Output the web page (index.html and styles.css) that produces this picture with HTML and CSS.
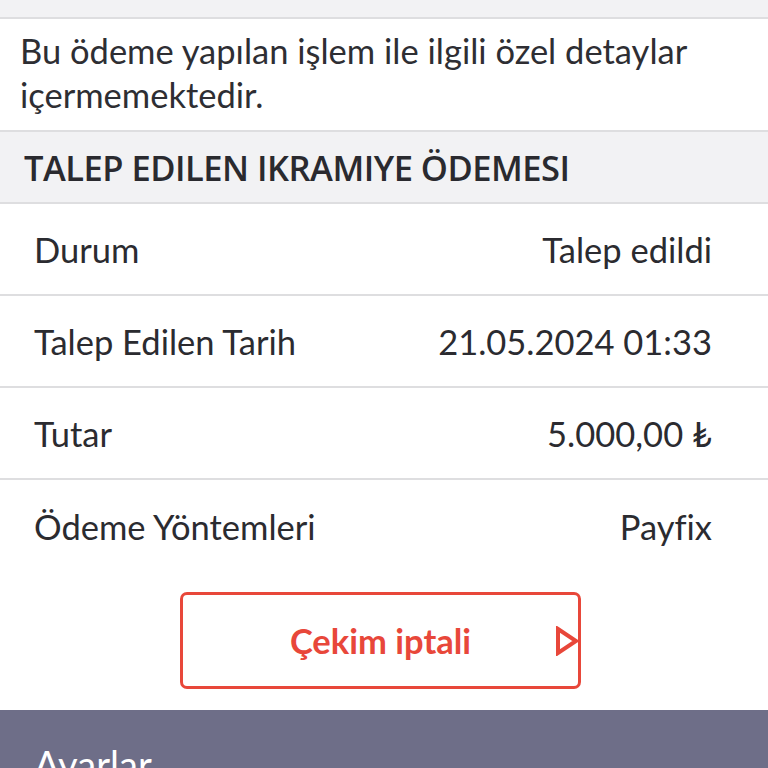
FILE: index.html
```html
<!DOCTYPE html>
<html lang="tr">
<head>
    <meta charset="UTF-8">
    <meta name="viewport" content="width=device-width, initial-scale=1.0">
    <title>Talep Edilen Ikramiye Ödemesi</title>
    <link rel="stylesheet" href="styles.css">
</head>
<body>

<div class="top-strip"></div>

<!-- Description -->
<div class="note">
    Bu ödeme yapılan işlem ile ilgili özel detaylar içermemektedir.
</div>

<!-- Section -->
<div class="section-title">TALEP EDILEN IKRAMIYE ÖDEMESI</div>

<div class="details">
    <div class="row">
        <span>Durum</span>
        <span>Talep edildi</span>
    </div>
    <div class="row">
        <span>Talep Edilen Tarih</span>
        <span>21.05.2024 01:33</span>
    </div>
    <div class="row">
        <span>Tutar</span>
        <span>5.000,00 ₺</span>
    </div>
    <div class="row last">
        <span>Ödeme Yöntemleri</span>
        <span>Payfix</span>
    </div>
</div>

<div class="actions">
    <button class="cancel-btn">
        Çekim iptali
        <svg class="arrow" width="26" height="30" viewBox="0 0 26 30">
            <path d="M4 3 L22 15 L4 27 Z" fill="none" stroke="#e8473a" stroke-width="4"/>
        </svg>
    </button>
</div>

<!-- Bottom bar -->
<div class="bottom-bar">
    <span>Ayarlar</span>
</div>

</body>
</html>
```

FILE: styles.css
```css
/* Base Styles */
* {
    margin: 0;
    padding: 0;
    box-sizing: border-box;
}

body {
    font-family: Lato, "Open Sans", sans-serif;
    background-color: #ffffff;
    color: #2b2b30;
    width: 768px;
    height: 768px;
    overflow: hidden;
}

.top-strip {
    height: 19px;
    background: #f2f2f4;
    border-bottom: 2px solid #dedee0;
}

/* Note */
.note {
    height: 113px;
    padding: 10px 20px 0 20px;
    font-size: 34.5px;
    line-height: 44px;
    color: #2e2e33;
    border-bottom: 2px solid #dedee0;
}

/* Section header */
.section-title {
    background: #f2f2f4;
    height: 72px;
    padding: 0 24px;
    display: flex;
    align-items: center;
    font-family: "Open Sans", sans-serif;
    font-weight: 600;
    font-size: 34.5px;
    letter-spacing: -0.5px;
    color: #2a2a2f;
    border-bottom: 2px solid #dedee0;
}

/* Rows */
.row {
    height: 92px;
    padding: 0 56px 0 34px;
    display: flex;
    align-items: center;
    justify-content: space-between;
    font-size: 34.5px;
    color: #2b2b30;
    border-bottom: 2px solid #dedee0;
}

.row.last {
    border-bottom: none;
}

/* Button */
.actions {
    display: flex;
    padding: 20px 0 21px 180px;
}

.cancel-btn {
    position: relative;
    width: 401px;
    height: 97px;
    background: #fff;
    border: 3px solid #e8473a;
    border-radius: 7px;
    color: #e8473a;
    font-family: Lato, sans-serif;
    font-weight: 700;
    font-size: 34.5px;
    display: flex;
    align-items: center;
    justify-content: center;
}

.cancel-btn .arrow {
    position: absolute;
    right: -2px;
    top: 31px;
}

/* Bottom bar */
.bottom-bar {
    background: #6e6e88;
    height: 80px;
    padding: 31px 34px 0 34px;
    color: #fff;
    font-size: 38px;
}
```
